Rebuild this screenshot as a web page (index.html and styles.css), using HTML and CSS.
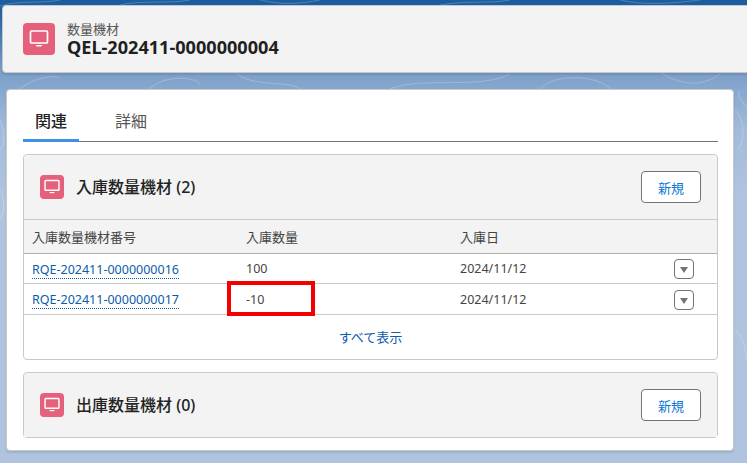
FILE: index.html
```html
<!DOCTYPE html>
<html lang="ja">
<head>
    <meta charset="UTF-8">
    <title>QEL-202411-0000000004</title>
    <link rel="stylesheet" href="styles.css">
</head>
<body>
    <svg class="contours" width="747" height="463" viewBox="0 0 747 463" fill="none" stroke="#ffffff" stroke-opacity="0.22">
        <path d="M20 89C30 80 50 74 60 78M150 89C158 78 190 74 200 84M235 72C250 88 290 80 300 89M390 89C420 76 480 90 510 74M540 89C555 72 600 76 610 89M660 72C680 85 700 88 720 74"/>
        <path d="M735 110C745 120 745 140 738 150M740 90C735 95 745 105 747 108M735 330C745 340 745 350 747 360"/>
        <path d="M0 6C20 0 40 4 60 0M120 5C140 0 170 4 190 0M260 0C280 5 300 4 320 0M440 5C470 0 490 4 510 0M620 0C640 5 670 4 700 0"/>
        <path d="M0 150C5 145 5 130 0 120M0 220C5 210 5 200 0 190"/>
    </svg>

    <header class="page-head">
        <span class="icon icon-lg">
            <svg width="22" height="22" viewBox="0 0 22 22" fill="none"><rect x="2.5" y="3" width="17" height="12" rx="1" stroke="#fff" stroke-width="1.7"/><path d="M7.5 17h7l-1.5 1.5h-4z" fill="#fff"/></svg>
        </span>
        <div class="head-text">
            <div class="head-label">数量機材</div>
            <div class="head-title">QEL-202411-0000000004</div>
        </div>
    </header>

    <main class="panel">
        <nav class="tabs">
            <a class="tab tab-active">関連</a>
            <a class="tab">詳細</a>
        </nav>

        <section class="card card-first">
            <div class="card-head">
                <span class="icon">
                    <svg width="18" height="18" viewBox="0 0 22 22" fill="none"><rect x="2.5" y="3" width="17" height="12" rx="1" stroke="#fff" stroke-width="1.8"/><path d="M7.5 17h7l-1.5 1.5h-4z" fill="#fff"/></svg>
                </span>
                <h2 class="card-title">入庫数量機材 (2)</h2>
                <button class="btn">新規</button>
            </div>
            <div class="row row-th">
                <div class="col-no">入庫数量機材番号</div>
                <div class="col-qty">入庫数量</div>
                <div class="col-date">入庫日</div>
            </div>
            <div class="row row-short">
                <div class="col-no"><a class="rec-link">RQE-202411-0000000016</a></div>
                <div class="col-qty num">100</div>
                <div class="col-date num">2024/11/12</div>
                <button class="menu-btn"><span class="caret"></span></button>
            </div>
            <div class="row">
                <div class="col-no"><a class="rec-link">RQE-202411-0000000017</a></div>
                <div class="col-qty num">-10</div>
                <div class="col-date num">2024/11/12</div>
                <button class="menu-btn"><span class="caret"></span></button>
            </div>
            <div class="card-foot"><a>すべて表示</a></div>
            <div class="highlight"></div>
        </section>

        <section class="card">
            <div class="card-head">
                <span class="icon">
                    <svg width="18" height="18" viewBox="0 0 22 22" fill="none"><rect x="2.5" y="3" width="17" height="12" rx="1" stroke="#fff" stroke-width="1.8"/><path d="M7.5 17h7l-1.5 1.5h-4z" fill="#fff"/></svg>
                </span>
                <h2 class="card-title">出庫数量機材 (0)</h2>
                <button class="btn">新規</button>
            </div>
        </section>
    </main>
</body>
</html>
```

FILE: styles.css
```css
* {
    box-sizing: border-box;
}
html, body {
    height: 463px;
    overflow: hidden;
}
body {
    position: relative;
    margin: 0;
    padding: 5px 0 0 2px;
    font-family: "Noto Sans", "Noto Sans CJK JP", sans-serif;
    font-size: 13px;
    color: #444;
    background: linear-gradient(#1b5e9f 0, #1b5e9f 5px, #7b9fca 72px, #a3bbda 130px, #b0c4df 200px);
}
.contours {
    position: absolute;
    left: 0;
    top: 0;
}
.page-head {
    position: relative;
    display: flex;
    align-items: center;
    height: 68px;
    margin-right: -10px;
    padding: 0 0 0 20px;
    background: #f3f3f3;
    border: 1px solid #c9c9c9;
    border-radius: 4px;
    box-shadow: 0 2px 2px rgba(0, 0, 0, 0.1);
}
.icon {
    display: flex;
    flex: none;
    align-items: center;
    justify-content: center;
    width: 24px;
    height: 24px;
    background: #e5607a;
    border-radius: 4px;
}
.icon-lg {
    width: 32px;
    height: 32px;
}
.head-text {
    margin-left: 12px;
}
.head-label {
    font-size: 13px;
    line-height: 15px;
    color: #555;
}
.head-title {
    font-size: 18.1px;
    font-weight: 700;
    line-height: 20px;
    color: #1f1f1f;
}
.panel {
    position: relative;
    width: 728px;
    height: 362px;
    margin: 16px 0 0 4px;
    padding: 0 15px 0 16px;
    background: #fff;
    border: 1px solid #c9c9c9;
    border-radius: 4px;
    box-shadow: 0 2px 2px rgba(0, 0, 0, 0.1);
}
.tabs {
    display: flex;
    height: 52px;
    border-bottom: 1px solid #747474;
}
.tab {
    width: 56px;
    margin-right: 24px;
    padding-top: 20px;
    font-size: 16px;
    line-height: 22px;
    text-align: center;
    color: #555;
}
.tab-active {
    height: 52px;
    font-weight: 500;
    color: #222;
    border-bottom: 3px solid #3f8fe8;
}
.card {
    position: relative;
    margin-top: 12px;
    background: #f3f3f3;
    border: 1px solid #c9c9c9;
    border-radius: 4px;
}
.card-first {
    background: #fff;
}
.card-head {
    display: flex;
    align-items: center;
    height: 64px;
    padding: 0 16px;
    background: #f3f3f3;
    border-radius: 4px 4px 0 0;
}
.card-title {
    flex: 1;
    margin: 0 0 0 12px;
    font-size: 16px;
    font-weight: 500;
    line-height: 20px;
    color: #222;
}
.btn {
    width: 60px;
    height: 32px;
    padding: 0;
    font-family: inherit;
    font-size: 13px;
    color: #0b77d8;
    background: #fff;
    border: 1px solid #747474;
    border-radius: 4px;
}
.row {
    display: flex;
    align-items: center;
    height: 31px;
    padding-left: 8px;
    border-bottom: 1px solid #c9c9c9;
}
.row-short {
    height: 30px;
}
.row-th {
    height: 35px;
    background: #f3f3f3;
    border-top: 1px solid #c9c9c9;
    border-bottom: 1px solid #aeaeae;
}
.col-no {
    width: 214px;
}
.col-qty {
    width: 214px;
}
.col-date {
    width: 214px;
}
.num {
    font-size: 12.5px;
}
.rec-link {
    font-size: 12.5px;
    color: #0b5cab;
    border-bottom: 1px dotted #0b5cab;
}
.menu-btn {
    display: flex;
    align-items: center;
    justify-content: center;
    width: 20px;
    height: 20px;
    margin-top: 1px;
    padding: 0;
    background: #fff;
    border: 1px solid #747474;
    border-radius: 4px;
}
.caret {
    width: 0;
    height: 0;
    margin-top: 2px;
    border-top: 6px solid #747474;
    border-left: 4.5px solid transparent;
    border-right: 4.5px solid transparent;
}
.card-foot {
    height: 44px;
    line-height: 44px;
    text-align: center;
    color: #0b5cab;
}
.highlight {
    position: absolute;
    left: 203px;
    top: 126px;
    width: 88px;
    height: 35px;
    border: 4px solid #f40000;
}
```
